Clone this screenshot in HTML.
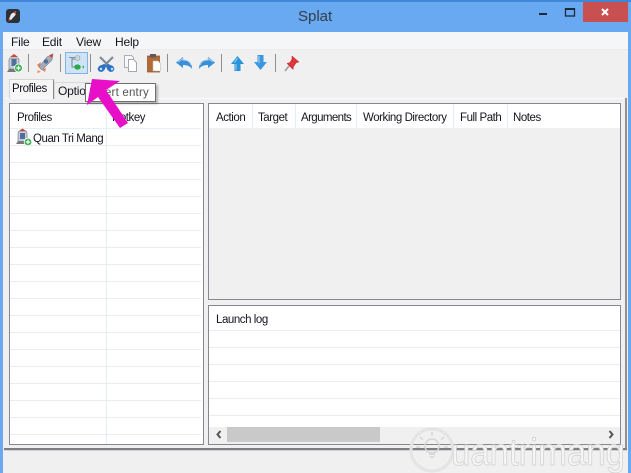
<!DOCTYPE html>
<html><head><meta charset="utf-8"><style>
html,body{margin:0;padding:0}
body{width:631px;height:473px;overflow:hidden;position:relative;background:#69a9f1;font-family:"Liberation Sans",sans-serif;font-size:11.5px;letter-spacing:-.45px;color:#15151f}
div{position:absolute;box-sizing:border-box}
.t{white-space:nowrap;line-height:14px}
.hl{height:1px;background:#ececef}
.vl{width:1px;background:#e6edf5}
.sep{width:1px;height:18px;top:54px;background:#8b8f94}
</style></head><body>
<div style="left:0;top:0;width:631px;height:2px;background:#3f86d9"></div>
<div class="t" style="left:298px;top:8px;font-size:15px;line-height:18px;color:#333d4a;letter-spacing:0">Splat</div>
<div style="left:583px;top:2px;width:45px;height:20px;background:#c85050"></div>
<svg style="position:absolute;left:0;top:0" width="631" height="32">
<rect x="6" y="9" width="14" height="14" rx="3" fill="#2c3138"/>
<path d="M9 19 L11 14 L16 11 L15.5 15 L11 20Z" fill="#e8e8e8"/><path d="M9 19l-1 2 3-1z" fill="#e2472f"/><path d="M13.5 12.5l3-1.5-1 3z" fill="#d8392c"/>
<rect x="539" y="13" width="8" height="2" fill="#1c2a3a"/>
<rect x="565.5" y="9" width="9" height="7" fill="none" stroke="#1c2a3a" stroke-width="1.3"/><rect x="565" y="8" width="10" height="2" fill="#1c2a3a"/>
<path d="M602 9l6 6M608 9l-6 6" stroke="#fff" stroke-width="2"/>
</svg>

<div style="left:3px;top:32px;width:625px;height:441px;background:#f0f0f0"></div>
<div style="left:3px;top:32px;width:625px;height:18px;background:#f5f6f8;border-bottom:1px solid #ebebec"></div>
<div class="t" style="left:11px;top:35px;font-size:12px;letter-spacing:-.2px">File</div>
<div class="t" style="left:42px;top:35px;font-size:12px;letter-spacing:-.2px">Edit</div>
<div class="t" style="left:76px;top:35px;font-size:12px;letter-spacing:-.2px">View</div>
<div class="t" style="left:115px;top:35px;font-size:12px;letter-spacing:-.2px">Help</div>

<!-- toolbar -->
<div class="sep" style="left:28px"></div><div class="sep" style="left:60px"></div><div class="sep" style="left:90px"></div><div class="sep" style="left:167px"></div><div class="sep" style="left:221px"></div><div class="sep" style="left:275px"></div>
<div style="left:65px;top:52px;width:23px;height:22px;background:#cfe3f5;border:1px solid #7fb4e6"></div>
<svg style="position:absolute;left:0;top:48px;filter:blur(.3px)" width="310" height="30">
<!-- profile -->
<path d="M10 10h8l1 2v9H9V12z" fill="#c9ced6" stroke="#7b7f86" stroke-width=".7"/><path d="M10 9l4-3 4 3z" fill="#c6473c"/><rect x="11.500" y="11" width="5" height="7" fill="#4f6f9e"/><path d="M7 24l2-3h11v3z" fill="#77797c"/><circle cx="18.500" cy="20" r="4" fill="#35b24c" stroke="#fff" stroke-width=".8"/><path d="M16.300 20h4.400M18.500 17.800v4.400" stroke="#fff" stroke-width="1.200"/>
<!-- rocket -->
<path d="M39 19L47 9l6-3-1 6-10 10z" fill="#a6acb6" stroke="#7a7f87" stroke-width=".6"/><path d="M49 7.500l4-2-1 4.500z" fill="#c8473b"/><circle cx="46" cy="13.500" r="2.200" fill="#4f6f9e"/><path d="M38 22l3 2-4 1z" fill="#e9934c"/><path d="M41 14l-4 3 2.500 3zM46 20l-1 4-3-2.500z" fill="#d57f63"/>
<!-- tree -->
<path d="M72 10v9h6M72 11h4" fill="none" stroke="#6f8a8f" stroke-width="1"/><circle cx="77.500" cy="10" r="2.500" fill="#cdd5d8" stroke="#8fa0a5" stroke-width=".6"/><ellipse cx="77.500" cy="19" rx="3.200" ry="2.600" fill="#27a84a"/><path d="M84 17.500l-2 1.500 2 1.500z" fill="#27a84a"/><path d="M69 9h6v1h-6z" fill="#7d9296"/>
<!-- scissors -->
<path d="M100 9l9 9M113 9l-9 9" stroke="#7f8b9a" stroke-width="2.200"/><path d="M104 16l-5 2-1.500 3 1.500 2.500 3 .5 2.500-2 1.500-3.500 1.500 3.500 2.500 2 3-.5 1.500-2.500-1.500-3-5-2-2 1.500z" fill="#2f72c4"/><circle cx="101" cy="21" r="1.200" fill="#cfe0f2"/><circle cx="112" cy="21" r="1.200" fill="#cfe0f2"/>
<!-- copy -->
<path d="M124.500 7.500h7l2 2v10h-9z" fill="#f6f8f9" stroke="#a9b0b6"/><path d="M128.500 11.500h5l3 3v9h-8z" fill="#fff" stroke="#a2a9b0"/>
<!-- paste -->
<path d="M147.500 8h12v16h-12z" fill="#b46a34" stroke="#8e4f24" stroke-width=".7"/><rect x="150" y="6" width="6" height="3.500" fill="#5b5b5b"/><path d="M153 13h5l2.500 2.500V23H153z" fill="#fff" stroke="#b8b8b8" stroke-width=".6"/>
<!-- undo -->
<path d="M176 14.500l7-5.500v3c6 0 9 3 9 9-2-3-5-4-9-4v3z" fill="#3b8fd6"/><path d="M178 14l5-3.500V12c4 0 7 1 8 5" fill="none" stroke="#a9d3f1" stroke-width="1"/>
<!-- redo -->
<path d="M215 14.500l-7-5.500v3c-6 0-9 3-9 9 2-3 5-4 9-4v3z" fill="#3b8fd6"/><path d="M213 14l-5-3.500V12c-4 0-7 1-8 5" fill="none" stroke="#a9d3f1" stroke-width="1"/>
<!-- up -->
<path d="M237.500 8l6.500 8h-3.500v7h-6v-7H231z" fill="#2a93dc"/><path d="M237.500 10l-3 4.500M236 16v6" stroke="#9fd5f5" stroke-width="1" fill="none"/>
<!-- down -->
<path d="M260.500 22l6.500-8h-3.500V7h-6v7H254z" fill="#3c97de"/><path d="M259 8v7" stroke="#a8d8f5" stroke-width="1"/>
<!-- pin -->
<path d="M292 8l7 6-2.500 .5-3 4-.5 3-6-6 3-1 2-3.500z" fill="#e0353c" stroke="#b82229" stroke-width=".5"/><path d="M289 18l-4 5" stroke="#9a9a9a" stroke-width="1.500"/>
</svg>

<!-- tab area -->
<div style="left:5px;top:98px;width:622px;height:1px;background:#fbfbfb"></div>
<div style="left:9px;top:79px;width:45px;height:20px;background:#f6f6f6;border:1px solid #d5d5d5;border-right:1.500px solid #8a8a8a;border-bottom:none"></div>
<div class="t" style="left:12px;top:82px">Profiles</div>
<div style="left:54px;top:82px;width:36px;height:17px;background:#f0f0f0;border:1px solid #d9d9d9;border-bottom:none"></div>
<div class="t" style="left:58px;top:84px;font-size:12px;letter-spacing:-.2px">Options</div>
<div style="left:625px;top:98px;width:2px;height:350px;background:#8f9296"></div>
<div style="left:4px;top:448px;width:623px;height:2px;background:#7d7f82"></div>
<div style="left:4px;top:450px;width:623px;height:1px;background:#d2d2d2"></div>

<!-- left panel -->
<div style="left:9px;top:103px;width:195px;height:342px;background:#fff;border:1px solid #85888e"></div>
<div style="left:10px;top:128px;width:191px;height:1px;background:#e8eef5"></div>
<div class="vl" style="left:106px;top:104px;height:340px"></div>
<div class="t" style="left:17px;top:111px">Profiles</div>
<div class="t" style="left:112px;top:111px">Hotkey</div>
<div class="hl" style="left:10px;top:145px;width:191px"></div><div class="hl" style="left:10px;top:162px;width:191px"></div><div class="hl" style="left:10px;top:179px;width:191px"></div><div class="hl" style="left:10px;top:196px;width:191px"></div><div class="hl" style="left:10px;top:213px;width:191px"></div><div class="hl" style="left:10px;top:230px;width:191px"></div><div class="hl" style="left:10px;top:247px;width:191px"></div><div class="hl" style="left:10px;top:264px;width:191px"></div><div class="hl" style="left:10px;top:281px;width:191px"></div><div class="hl" style="left:10px;top:298px;width:191px"></div><div class="hl" style="left:10px;top:315px;width:191px"></div><div class="hl" style="left:10px;top:332px;width:191px"></div><div class="hl" style="left:10px;top:349px;width:191px"></div><div class="hl" style="left:10px;top:366px;width:191px"></div><div class="hl" style="left:10px;top:383px;width:191px"></div><div class="hl" style="left:10px;top:400px;width:191px"></div><div class="hl" style="left:10px;top:417px;width:191px"></div><div class="hl" style="left:10px;top:434px;width:191px"></div>
<svg style="position:absolute;left:15px;top:128px;filter:blur(.3px)" width="18" height="18">
<path d="M4 3h7l1 2v9H3V5z" fill="#c9ced6" stroke="#7b7f86" stroke-width=".7"/><path d="M4 3l3.500-2.500L11 3z" fill="#c6473c"/><rect x="5" y="5" width="5" height="6" fill="#4f6f9e"/><path d="M1 16l2-3h10v3z" fill="#77797c"/><circle cx="13" cy="14" r="3.800" fill="#35b24c" stroke="#fff" stroke-width=".8"/><path d="M10.800 14h4.400M13 11.800v4.400" stroke="#fff" stroke-width="1.200"/>
</svg>
<div class="t" style="left:33px;top:132px">Quan Tri Mang</div>

<!-- right top panel -->
<div style="left:208px;top:103px;width:413px;height:197px;background:#f0f0f0;border:1px solid #85888e"></div>
<div style="left:209px;top:104px;width:411px;height:24px;background:#fff"></div>
<div class="vl" style="left:252px;top:104px;height:24px"></div><div class="vl" style="left:295px;top:104px;height:24px"></div><div class="vl" style="left:356px;top:104px;height:24px"></div><div class="vl" style="left:453px;top:104px;height:24px"></div><div class="vl" style="left:507px;top:104px;height:24px"></div>
<div class="t" style="left:216px;top:111px">Action</div>
<div class="t" style="left:258px;top:111px">Target</div>
<div class="t" style="left:301px;top:111px;letter-spacing:-.6px">Arguments</div>
<div class="t" style="left:363px;top:111px">Working Directory</div>
<div class="t" style="left:460px;top:111px">Full Path</div>
<div class="t" style="left:513px;top:111px">Notes</div>

<!-- log panel -->
<div style="left:208px;top:305px;width:413px;height:140px;background:#fff;border:1px solid #85888e"></div>
<div class="t" style="left:216px;top:313px">Launch log</div>
<div class="hl" style="left:209px;top:330px;width:411px"></div><div class="hl" style="left:209px;top:347px;width:411px"></div><div class="hl" style="left:209px;top:364px;width:411px"></div><div class="hl" style="left:209px;top:381px;width:411px"></div><div class="hl" style="left:209px;top:398px;width:411px"></div><div class="hl" style="left:209px;top:415px;width:411px"></div>
<div style="left:209px;top:427px;width:411px;height:17px;background:#f0f0f0"></div>
<div style="left:227px;top:427px;width:153px;height:15px;background:#c9c9c9"></div>

<svg style="position:absolute;left:0;top:0" width="631" height="473">
<path d="M220.500 431l-3 3.500 3 3.500" fill="none" stroke="#555" stroke-width="2"/>
<path d="M609.500 431l3 3.500-3 3.500" fill="none" stroke="#555" stroke-width="2"/>
<!-- watermark -->
<g fill="none" stroke="#dcdcdc" stroke-width="1.500">
<circle cx="432" cy="450" r="21" stroke-width="3" stroke="#e4e4e4"/>
<circle cx="432" cy="446" r="7" stroke="#d6d6d6"/>
<path d="M429 454h6M430 457h4M432 432v4M420 437l3 3M444 437l-3 3M416 447h4M444 447h4" stroke="#d6d6d6"/>
</g>
<text x="451" y="465" font-family="Liberation Sans,sans-serif" font-size="38" letter-spacing="0" textLength="174" lengthAdjust="spacingAndGlyphs" fill="#f6f6f6" stroke="#d4d4d4" stroke-width=".9">uantrimang</text>
</svg>

<!-- tooltip -->
<div style="left:85px;top:83px;width:71px;height:19px;background:#fdfdfd;border:1px solid #6f6f6f;box-shadow:2px 2px 2px rgba(0,0,0,.25)"></div>
<div class="t" style="left:89px;top:86px;font-size:11.500px;color:#555;letter-spacing:.2px">Insert entry</div>

<!-- arrow -->
<svg style="position:absolute;left:0;top:0" width="631" height="473">
<path d="M92 79L120 81 106 90 128 123 120 128 98 97 87 105Z" fill="#e80fc9"/>
</svg>
</body></html>
